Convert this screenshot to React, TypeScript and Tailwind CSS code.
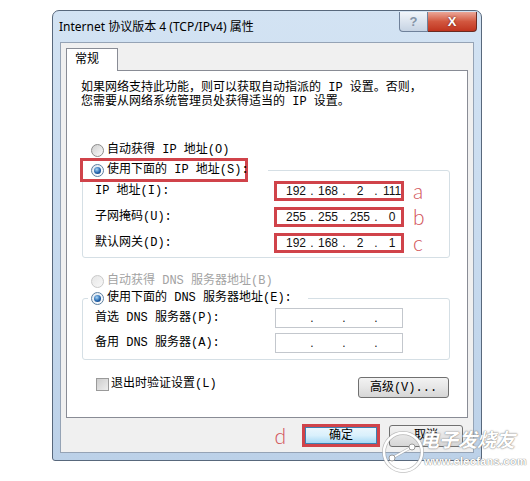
const CJK = "font-['Liberation_Mono','Noto_Sans_CJK_SC',monospace]";
const NUM = "font-['Liberation_Sans','Noto_Sans_CJK_SC',sans-serif]";

type RadioState = "off" | "on" | "disabled";

function Radio({ state }: { state: RadioState }) {
  if (state === "on") {
    return (
      <span className="flex h-[13px] w-[13px] shrink-0 items-center justify-center rounded-full border border-[#5d7f9f] bg-linear-to-br from-[#dfe8f1] to-white">
        <span className="h-[7px] w-[7px] rounded-full bg-[radial-gradient(circle_at_40%_35%,#a8d6f7,#2466ae_55%,#0a2d66)]" />
      </span>
    );
  }
  if (state === "disabled") {
    return (
      <span className="h-[13px] w-[13px] shrink-0 rounded-full border border-[#c9c9c9] bg-linear-to-br from-[#e6e6e6] to-[#f8f8f8]" />
    );
  }
  return (
    <span className="h-[13px] w-[13px] shrink-0 rounded-full border border-[#8c8c8c] bg-linear-to-br from-[#cfcfcf] to-[#fbfbfb]" />
  );
}

function IpBox({ parts }: { parts?: string[] }) {
  const segs = parts ?? ["", "", "", ""];
  return (
    <div className={`flex h-full w-full items-center overflow-hidden bg-white pl-[6px] text-[12px] leading-[14px] text-[#111] ${NUM}`}>
      {segs.map((p, i) => (
        <div key={i} className="flex shrink-0 items-center">
          <span className="w-[26px] text-center">{p}</span>
          {i < 3 ? <span className="w-[6px] text-center">.</span> : null}
        </div>
      ))}
    </div>
  );
}

const IP_ROWS = [
  { label: "IP 地址(I):", parts: ["192", "168", "2", "111"], tag: "a" },
  { label: "子网掩码(U):", parts: ["255", "255", "255", "0"], tag: "b" },
  { label: "默认网关(D):", parts: ["192", "168", "2", "1"], tag: "c" },
];

const DNS_ROWS = ["首选 DNS 服务器(P):", "备用 DNS 服务器(A):"];

export default function App() {
  return (
    <div className={`relative h-[481px] w-[530px] overflow-hidden bg-white pt-[10px] pl-[52px] ${CJK}`}>
      {/* window */}
      <div className="h-[451px] w-[430px] rounded-t-[7px] rounded-b-[3px] border border-[#58687c] bg-linear-to-b from-[#d3e3f3] via-[#c8dbef] to-[#bcd1e8]">
        {/* title bar */}
        <div className="flex h-[31px] justify-between">
          <div className="pt-[8px] pl-[6px] font-['Noto_Sans','Noto_Sans_CJK_SC',sans-serif] text-[12px] leading-[16px] text-black">
            Internet 协议版本 4 (TCP/IPv4) 属性
          </div>
          <div className="mt-[1px] mr-[4px] flex h-[20px]">
            <div className="flex w-[29px] items-center justify-center rounded-bl-[4px] border border-t-0 border-[#6f819a] bg-linear-to-b from-[#f1f5fa] to-[#c6d3e3] font-['Liberation_Sans',sans-serif] text-[13px] font-bold text-[#8594a8]">
              ?
            </div>
            <div className="flex w-[49px] items-center justify-center rounded-br-[4px] border border-t-0 border-l-0 border-[#6a2b22] bg-linear-to-b from-[#eaa697] via-[#d2573f] to-[#c0341e] font-['Liberation_Sans',sans-serif] text-[13px] font-bold text-white [text-shadow:0_0_2px_#5a1a10]">
              X
            </div>
          </div>
        </div>

        {/* client area */}
        <div className="mx-[7px] h-[411px] border border-[#95a3b5] bg-[#f0f0f0] pt-[5px] pl-[5px]">
          <div className="relative z-10 mb-[-1px] flex h-[23px] w-[52px] items-center border border-b-0 border-[#898c95] bg-white pl-[8px] text-[12px] text-black">
            常规
          </div>
          <div className="h-[348px] w-[402px] border border-[#898c95] bg-white">
            <div className="pt-[10px] pl-[14px] text-[12px] leading-[14px] text-black">
              <div>如果网络支持此功能，则可以获取自动指派的 IP 设置。否则，</div>
              <div>您需要从网络系统管理员处获得适当的 IP 设置。</div>
            </div>

            <div className="mt-[33px] ml-[24px] flex h-[16px] items-center gap-[3px] text-[12px] text-black">
              <Radio state="off" />
              <span>自动获得 IP 地址(O)</span>
            </div>

            <fieldset className="ml-[15px] w-[368px] rounded-[3px] border border-[#d5dfe5] pb-[4px]">
              <legend className="ml-[-3px] pr-[20px]">
                <div className="flex h-[24px] w-[168px] items-center gap-[3px] border-[3px] border-[#d0434a] pl-[8px] text-[12px] text-black">
                  <Radio state="on" />
                  <span className="whitespace-nowrap">使用下面的 IP 地址(S):</span>
                </div>
              </legend>
              <div className="mt-[-1px] flex flex-col gap-[6px]">
                {IP_ROWS.map((r) => (
                  <div key={r.tag} className="flex h-[20px] items-center pl-[12px] text-[12px] text-black">
                    <span className="w-[179px]">{r.label}</span>
                    <div className="h-[20px] w-[130px] border-[3px] border-[#d0434a]">
                      <IpBox parts={r.parts} />
                    </div>
                    <span className="ml-[9px] font-['Lato','Open_Sans',sans-serif] text-[21px] leading-[20px] font-light text-[#d2545a]">
                      {r.tag}
                    </span>
                  </div>
                ))}
              </div>
            </fieldset>

            <div className="mt-[15px] ml-[24px] flex h-[16px] items-center gap-[3px] text-[12px] text-[#a3a3a3]">
              <Radio state="disabled" />
              <span>自动获得 DNS 服务器地址(B)</span>
            </div>

            <fieldset className="ml-[15px] w-[368px] rounded-[3px] border border-[#d5dfe5] pb-[6px]">
              <legend className="ml-[5px] pr-[16px]">
                <div className="flex h-[18px] items-center gap-[3px] pl-[3px] text-[12px] text-black">
                  <Radio state="on" />
                  <span className="whitespace-nowrap">使用下面的 DNS 服务器地址(E):</span>
                </div>
              </legend>
              <div className="mt-[1px] flex flex-col gap-[5px]">
                {DNS_ROWS.map((label) => (
                  <div key={label} className="flex h-[20px] items-center pl-[12px] text-[12px] text-black">
                    <span className="w-[180px]">{label}</span>
                    <div className="h-[20px] w-[128px] border border-[#c3c7cd] bg-white pl-[1px]">
                      <IpBox />
                    </div>
                  </div>
                ))}
              </div>
            </fieldset>

            <div className="mt-[17px] flex items-start justify-between pr-[18px] pl-[29px]">
              <div className="flex h-[14px] items-center gap-[2px] text-[12px] leading-[14px] text-black">
                <span className="h-[13px] w-[13px] border border-[#9a9a9a] bg-linear-to-br from-[#cdcdcd] to-[#eeeeee]" />
                <span>退出时验证设置(L)</span>
              </div>
              <div className="flex h-[21px] w-[91px] items-center justify-center rounded-[3px] border border-[#707070] bg-linear-to-b from-[#f3f3f3] via-[#e6e6e6] to-[#d6d6d6] text-[12px] text-black">
                高级(V)...
              </div>
            </div>
          </div>

          <div className="mt-[6px] flex items-center justify-end pr-[10px]">
            <span className="mr-[16px] font-['Lato','Open_Sans',sans-serif] text-[21px] leading-[20px] font-light text-[#d2545a]">
              d
            </span>
            <div className="h-[23px] w-[78px] border-[3px] border-[#d0434a]">
              <div className="flex h-full w-full items-center justify-center border border-[#3c7fb1] bg-linear-to-b from-[#eaf6fd] via-[#d9f0fc] to-[#a7d9f5] text-[12px] text-black">
                确定
              </div>
            </div>
            <div className="ml-[9px] flex h-[22px] w-[74px] items-center justify-center rounded-[3px] border border-[#707070] bg-linear-to-b from-[#f3f3f3] via-[#e6e6e6] to-[#d6d6d6] text-[12px] text-black">
              取消
            </div>
          </div>
        </div>
      </div>

      {/* watermark */}
      <svg className="absolute top-[428px] left-[379px]" width="48" height="48" viewBox="0 0 48 48">
        <circle cx="24" cy="24" r="19" fill="none" stroke="#9a9a9a" strokeWidth="4" opacity="0.6" />
        <circle cx="24" cy="24" r="19" fill="none" stroke="#ffffff" strokeWidth="2.5" />
        <line x1="13" y1="30" x2="33" y2="19" stroke="#9a9a9a" strokeWidth="3" opacity="0.6" />
        <line x1="13" y1="30" x2="33" y2="19" stroke="#ffffff" strokeWidth="1.5" />
        <circle cx="13" cy="30" r="3" fill="#ffffff" stroke="#9a9a9a" strokeWidth="1" />
        <circle cx="33" cy="19" r="3" fill="#ffffff" stroke="#9a9a9a" strokeWidth="1" />
      </svg>
      <div className="absolute top-[425px] left-[420px] font-['Noto_Sans_CJK_SC',sans-serif] text-[19px] leading-[28px] font-bold text-white italic [text-shadow:0_0_1px_#777,0_0_2px_#999]">
        电子发烧友
      </div>
      <div className="absolute top-[455px] left-[424px] font-['Liberation_Sans',sans-serif] text-[11px] leading-[13px] font-bold tracking-[0.3px] text-white [text-shadow:0_0_1px_#777,0_0_1px_#999]">
        www.elecfans.com
      </div>
    </div>
  );
}
